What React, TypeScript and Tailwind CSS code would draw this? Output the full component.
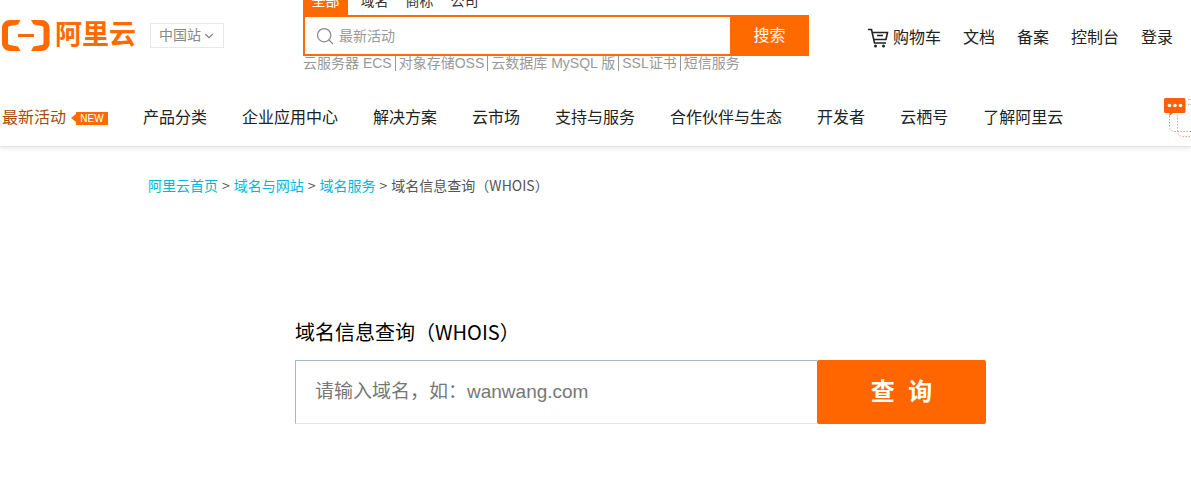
import React from 'react'
import { ChevronDown, Search } from 'lucide-react'

const searchTabs = ['全部', '域名', '商标', '公司']

const hotWords = ['云服务器 ECS', '对象存储OSS', '云数据库 MySQL 版', 'SSL证书', '短信服务']

const userLinks = ['文档', '备案', '控制台', '登录']

const navLinks = [
  '产品分类',
  '企业应用中心',
  '解决方案',
  '云市场',
  '支持与服务',
  '合作伙伴与生态',
  '开发者',
  '云栖号',
  '了解阿里云',
]

const crumbs = ['阿里云首页', '域名与网站', '域名服务']

const Logo = () => (
  <a href="#" className="flex items-center gap-[5px] text-[#ff6a00]">
    <svg width="49" height="32" viewBox="0 0 49 32" fill="currentColor">
      <path d="M19.500 1H9C4.500 1 1 4.500 1 9V24C1 28.500 4.500 32 9 32H19.500L17 27.500L9 26C7.500 25.700 7 25 7 23.500V9.500C7 8 7.500 7.300 9 7L17 5.500Z" />
      <path d="M30 1H40.500C45 1 48.500 4.500 48.500 9V24C48.500 28.500 45 32 40.500 32H30L32.500 27.500L40.500 26C42 25.700 42.500 25 42.500 23.500V9.500C42.500 8 42 7.300 40.500 7L32.500 5.500Z" />
      <rect x="17" y="15" width="16" height="3" />
    </svg>
    <span className="text-[27px] leading-8 font-bold whitespace-nowrap">阿里云</span>
  </a>
)

const CartIcon = () => (
  <svg width="21" height="20" viewBox="0 0 21 20" fill="none" stroke="#222" strokeWidth="1.600">
    <path d="M0 1.500H3.500L6.500 15H18" />
    <path d="M4.500 4.500H19.500L18 11.500H6" />
    <path d="M9 7.500H15" />
    <circle cx="7.500" cy="18" r="1.500" fill="#222" stroke="none" />
    <circle cx="15.500" cy="18" r="1.500" fill="#222" stroke="none" />
  </svg>
)

const ChatIcon = () => (
  <svg width="28" height="42" viewBox="0 0 28 42" fill="none" className="ml-auto shrink-0">
    <path d="M6.500 19V30Q7 34.500 13 34.500H28" stroke="#aaa" strokeDasharray="1.500 1.500" />
    <path d="M14.500 18V34Q15 39.500 20 39.500H28" stroke="#f5a173" strokeDasharray="1.500 1.500" />
    <path d="M25 2.500H28" stroke="#bbb" strokeDasharray="1.500 1" />
    <path d="M25 7.500H28" stroke="#f5a173" strokeDasharray="1.500 1" />
    <path d="M2 1H21Q22.500 1 22.500 2.500V14.500Q22.500 16 21 16H10L6.500 19V16H2.500Q1 16 1 14.500V2.500Q1 1 2.500 1Z" fill="#ff5f0a" />
    <circle cx="6.500" cy="8.500" r="1.800" fill="#fff" />
    <circle cx="12" cy="8.500" r="1.800" fill="#fff" />
    <circle cx="17.500" cy="8.500" r="1.800" fill="#fff" />
  </svg>
)

const NewBadge = () => (
  <span className="flex items-center">
    <svg width="5" height="8" viewBox="0 0 5 8" fill="#ff6a00">
      <path d="M5 0V8L0 4Z" />
    </svg>
    <span className="w-8 h-[13px] bg-[#ff6a00] text-center text-[10px] leading-[13px] text-white">NEW</span>
  </span>
)

const SearchBox = () => (
  <form className="w-[506px] ml-[79px]" onSubmit={(e) => e.preventDefault()}>
    <div className="flex items-end h-[15px] overflow-hidden text-sm text-[#333]">
      {searchTabs.map((tab, i) => (
        <button
          key={tab}
          type="button"
          className={`w-[45px] h-7 shrink-0 leading-7 ${i === 0 ? 'mr-1 bg-[#ff6a00] text-white' : ''}`}
        >
          {tab}
        </button>
      ))}
    </div>
    <div className="flex h-[41px]">
      <label className="flex flex-1 items-center gap-1 border-2 border-r-0 border-[#ff6a00] pl-[10px]">
        <Search size={20} strokeWidth={1.5} className="text-[#888]" />
        <input
          aria-label="搜索"
          placeholder="最新活动"
          className="flex-1 min-w-0 text-sm outline-none placeholder:text-[#999]"
        />
      </label>
      <button type="submit" className="w-[79px] bg-[#ff6a00] text-base text-white">
        搜索
      </button>
    </div>
    <div className="flex h-[15px] items-center text-sm leading-[15px] text-[#999] whitespace-nowrap">
      {hotWords.map((word, i) => (
        <a key={word} href="#" className={i === 0 ? 'pr-[3px]' : 'border-l border-[#999] px-[3px]'}>
          {word}
        </a>
      ))}
    </div>
  </form>
)

const Header = () => (
  <header className="border-b border-[#e3e3e3] shadow-[0_2px_4px_rgba(0,0,0,0.08)]">
    <div className="flex h-[86px] items-start">
      <div className="flex items-center gap-[14px] pt-[19px] pl-px">
        <Logo />
        <div className="relative">
          <select
            aria-label="站点"
            className="w-[74px] h-[25px] appearance-none border border-[#e8e8e8] pl-2 text-sm leading-[22px] text-[#888]"
          >
            <option>中国站</option>
          </select>
          <ChevronDown size={14} strokeWidth={2} className="absolute right-2 top-[6px] text-[#888] pointer-events-none" />
        </div>
      </div>
      <SearchBox />
      <div className="ml-auto flex gap-[22px] pt-[26px] pr-[18px] text-base text-[#222] whitespace-nowrap">
        <a href="#" className="flex items-center gap-1">
          <CartIcon />
          购物车
        </a>
        {userLinks.map((link) => (
          <a key={link} href="#">
            {link}
          </a>
        ))}
      </div>
    </div>
    <nav className="flex h-[60px] items-center gap-[35px] pt-1 pl-[2px] text-base text-[#222] whitespace-nowrap">
      <a href="#" className="flex items-center gap-[5px] text-[#a84a08]">
        最新活动
        <NewBadge />
      </a>
      {navLinks.map((link) => (
        <a key={link} href="#">
          {link}
        </a>
      ))}
      <ChatIcon />
    </nav>
  </header>
)

export default function App() {
  return (
    <div className="bg-white font-['Liberation_Sans','Noto_Sans_CJK_SC',sans-serif]">
      <Header />
      <main className="pt-7">
        <div className="flex gap-1 pl-[148px] text-sm text-[#555] font-['Noto_Sans_CJK_SC',sans-serif]">
          {crumbs.map((crumb) => (
            <React.Fragment key={crumb}>
              <a href="#" className="text-[#00b7d9]">
                {crumb}
              </a>
              <span>&gt;</span>
            </React.Fragment>
          ))}
          <span>域名信息查询（WHOIS）</span>
        </div>
        <form className="w-[691px] ml-[295px] mt-[123px]" onSubmit={(e) => e.preventDefault()}>
          <label
            htmlFor="domain"
            className="block text-xl leading-7 text-black font-['Noto_Sans_CJK_SC',sans-serif]"
          >
            域名信息查询（WHOIS）
          </label>
          <div className="mt-[14px] flex h-16">
            <input
              id="domain"
              placeholder="请输入域名，如：wanwang.com"
              className="flex-1 min-w-0 border border-r-0 border-t-[#a9b9c0] border-l-[#a9b9c0] border-b-[#e3e6e8] pl-[19px] text-[19px] outline-none placeholder:text-[#777]"
            />
            <button type="submit" className="w-[169px] rounded-xs bg-[#ff6600] text-2xl font-bold text-white">
              查&nbsp;&nbsp;询
            </button>
          </div>
        </form>
      </main>
    </div>
  )
}
